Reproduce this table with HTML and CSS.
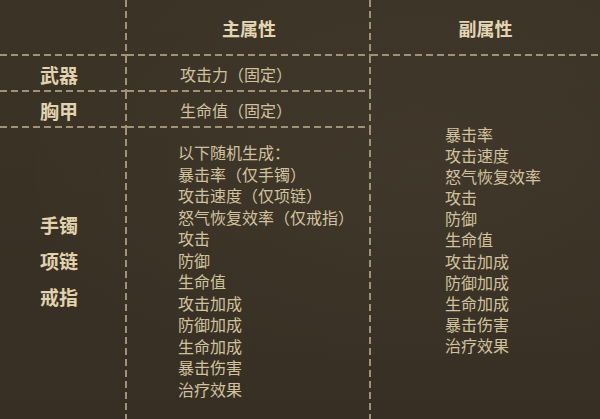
FILE: index.html
```html
<!DOCTYPE html>
<html lang="zh-CN">
<head>
<meta charset="utf-8">
<title>属性表</title>
<link rel="stylesheet" href="styles.css">
</head>
<body>
<div class="table">
  <div class="cell head br bb"></div>
  <div class="cell head br bb">主属性</div>
  <div class="cell head bb">副属性</div>

  <div class="cell label br bb">武器</div>
  <div class="cell fixed br bb">攻击力（固定）</div>
  <div class="cell sub">
    <ul class="list sub-list">
      <li>暴击率</li>
      <li>攻击速度</li>
      <li>怒气恢复效率</li>
      <li>攻击</li>
      <li>防御</li>
      <li>生命值</li>
      <li>攻击加成</li>
      <li>防御加成</li>
      <li>生命加成</li>
      <li>暴击伤害</li>
      <li>治疗效果</li>
    </ul>
  </div>

  <div class="cell label br bb">胸甲</div>
  <div class="cell fixed br bb">生命值（固定）</div>

  <div class="cell labels br">
    <div>手镯</div>
    <div>项链</div>
    <div>戒指</div>
  </div>
  <div class="cell br">
    <ul class="list main-list">
      <li>以下随机生成：</li>
      <li>暴击率（仅手镯）</li>
      <li>攻击速度（仅项链）</li>
      <li>怒气恢复效率（仅戒指）</li>
      <li>攻击</li>
      <li>防御</li>
      <li>生命值</li>
      <li>攻击加成</li>
      <li>防御加成</li>
      <li>生命加成</li>
      <li>暴击伤害</li>
      <li>治疗效果</li>
    </ul>
  </div>
</div>
</body>
</html>
```

FILE: styles.css
```css
html, body {
  margin: 0;
  padding: 0;
}

body {
  width: 600px;
  height: 419px;
  overflow: hidden;
  background: #3a3125;
  font-family: "Noto Sans CJK SC", "Noto Sans", sans-serif;
  color: #d0c29e;
}

.table {
  display: grid;
  grid-template-columns: 127px 244px 229px;
  grid-template-rows: 56px 36px 36px 291px;
  width: 600px;
  height: 419px;
  background:
    radial-gradient(ellipse at 70% 40%, rgba(255, 240, 200, 0.03), transparent 70%),
    linear-gradient(to bottom, #3c3327, #382f24);
}

.cell {
  --line: #9f9277;
  --vdash: repeating-linear-gradient(to bottom, var(--line) 0 7px, transparent 7px 11px);
  --hdash: repeating-linear-gradient(to right, var(--line) 0 7px, transparent 7px 11px);
  background-repeat: no-repeat;
  box-sizing: border-box;
}

.br {
  background-image: var(--vdash);
  background-size: 2px 100%;
  background-position: right top;
}

.bb {
  background-image: var(--hdash);
  background-size: 100% 2px;
  background-position: left bottom;
}

.br.bb {
  background-image: var(--vdash), var(--hdash);
  background-size: 2px 100%, 100% 2px;
  background-position: right top, left bottom;
}

.head {
  display: flex;
  align-items: center;
  justify-content: center;
  font-size: 18px;
  font-weight: 700;
  color: #e2d6b2;
  padding-bottom: 1px;
}

.label {
  display: flex;
  align-items: center;
  padding-left: 40px;
  font-size: 19px;
  font-weight: 700;
  color: #e0d3ae;
}

.fixed {
  display: flex;
  align-items: center;
  padding-left: 53px;
  font-size: 16px;
}

.sub {
  grid-column: 3;
  grid-row: 2 / span 3;
  padding: 68px 0 0 74px;
}

.labels {
  padding: 79px 0 0 40px;
  font-size: 19px;
  font-weight: 700;
  line-height: 36px;
  color: #e0d3ae;
}

.list {
  list-style: none;
  margin: 0;
  padding: 0;
  font-size: 16px;
}

.main-list {
  padding: 14px 0 0 51px;
  line-height: 21.5px;
}

.sub-list {
  line-height: 21.1px;
}
```
